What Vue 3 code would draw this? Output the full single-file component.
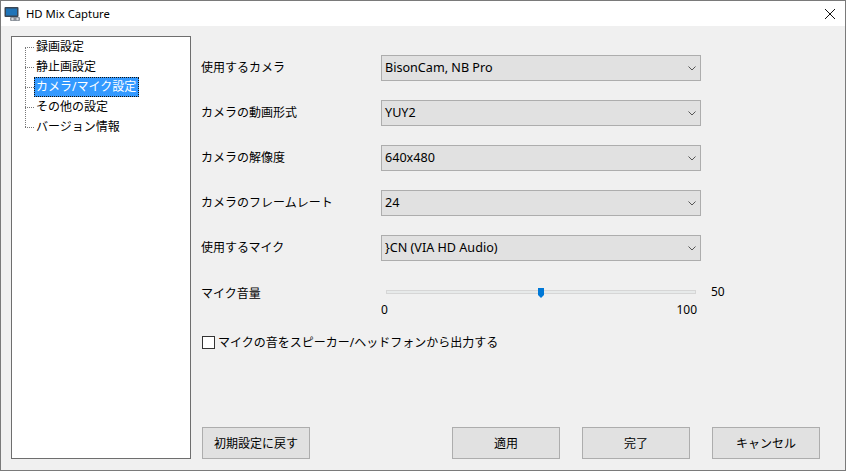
<script setup>
const tree = [
  { label: '録画設定' },
  { label: '静止画設定' },
  { label: 'カメラ/マイク設定', selected: true },
  { label: 'その他の設定' },
  { label: 'バージョン情報' }
]
const rows = [
  { label: '使用するカメラ', value: 'BisonCam, NB Pro' },
  { label: 'カメラの動画形式', value: 'YUY2' },
  { label: 'カメラの解像度', value: '640x480' },
  { label: 'カメラのフレームレート', value: '24' },
  { label: '使用するマイク', value: '}CN (VIA HD Audio)' }
]
</script>

<template>
  <div class="window">
    <header class="titlebar">
      <svg class="appicon" width="17" height="16" viewBox="0 0 17 16">
        <rect x="0.5" y="1" width="14" height="10" rx="1" fill="#3a4654" />
        <rect x="2" y="2.5" width="11" height="7" fill="#1f74b8" />
        <rect x="6" y="11" width="10" height="4" rx="1" fill="#8b929a" />
        <circle cx="8.5" cy="13" r="1.2" fill="#d5d8dc" />
        <circle cx="13.5" cy="13" r="1.2" fill="#d5d8dc" />
      </svg>
      <span class="title">HD Mix Capture</span>
      <svg class="close" width="12" height="12" viewBox="0 0 12 12">
        <path d="M1 1 L11 11 M11 1 L1 11" stroke="#111" stroke-width="1" fill="none" />
      </svg>
    </header>

    <div class="content">
      <nav class="tree">
        <div class="guide"></div>
        <div v-for="item in tree" :key="item.label" class="node">
          <span class="dash"></span>
          <span class="node-label" :class="{ selected: item.selected }">{{ item.label }}</span>
        </div>
      </nav>

      <main class="panel">
        <div class="form">
          <div v-for="row in rows" :key="row.label" class="row">
            <span class="label">{{ row.label }}</span>
            <div class="combo">
              <span class="combo-text">{{ row.value }}</span>
              <svg width="8" height="5" viewBox="0 0 8 5">
                <path d="M0.5 0.5 L4 4 L7.5 0.5" stroke="#555" stroke-width="1" fill="none" />
              </svg>
            </div>
          </div>

          <div class="volume">
            <span class="label">マイク音量</span>
            <div class="slider">
              <div class="track"><span class="thumb"></span></div>
              <div class="ticks"><span>0</span><span>100</span></div>
            </div>
            <span class="value">50</span>
          </div>

          <label class="check">
            <span class="box"></span>
            <span>マイクの音をスピーカー/ヘッドフォンから出力する</span>
          </label>
        </div>

        <footer class="buttons">
          <button class="btn">初期設定に戻す</button>
          <div class="right">
            <button class="btn">適用</button>
            <button class="btn">完了</button>
            <button class="btn">キャンセル</button>
          </div>
        </footer>
      </main>
    </div>
  </div>
</template>

<style>
html, body { margin: 0; background: #f0f0f0; overflow: hidden; }
</style>

<style scoped>
.window {
  box-sizing: border-box;
  width: 846px;
  height: 471px;
  border: 1px solid #7a7a7a;
  background: #f0f0f0;
  display: flex;
  flex-direction: column;
  font-family: "Noto Sans", "Noto Sans CJK JP", sans-serif;
  font-size: 12px;
  color: #000;
}
.titlebar {
  height: 25px;
  flex: none;
  background: #fff;
  display: flex;
  align-items: center;
  padding-left: 3px;
  padding-right: 9px;
}
.appicon { margin-right: 5px; }
.title { flex: 1; font-size: 11.3px; }
.content {
  flex: 1;
  display: flex;
  padding: 10px 0 11px 10px;
  min-height: 0;
}
.tree {
  position: relative;
  box-sizing: border-box;
  width: 180px;
  background: #fff;
  border: 1px solid #6e6e6e;
  flex: none;
}
.guide {
  position: absolute;
  left: 13px;
  top: 10px;
  height: 80px;
  border-left: 1px dotted #777;
}
.node {
  height: 20px;
  display: flex;
  align-items: center;
  padding-left: 13px;
  box-sizing: border-box;
}
.dash {
  width: 9px;
  border-top: 1px dotted #777;
}
.node-label {
  padding: 0 1px;
  line-height: 18px;
  height: 18px;
  border: 1px solid transparent;
  white-space: nowrap;
}
.selected {
  background: #3399ff;
  color: #fff;
  border: 1px dotted #1a1208;
  padding-right: 2px;
}
.panel {
  flex: 1;
  display: flex;
  flex-direction: column;
  justify-content: space-between;
  padding-left: 11px;
  padding-right: 25px;
  min-width: 0;
}
.form {
  padding-top: 19px;
  display: flex;
  flex-direction: column;
}
.row {
  display: grid;
  grid-template-columns: 179px 320px;
  align-items: center;
  height: 26px;
  margin-bottom: 19px;
}
.label { white-space: nowrap; margin-left: -1px; }
.row .label { margin-top: -3px; }
.combo {
  box-sizing: border-box;
  height: 26px;
  background: #e1e1e1;
  border: 1px solid #adadad;
  display: flex;
  align-items: center;
  justify-content: space-between;
  padding: 0 4px 0 3px;
  font-size: 12.6px;
}
.combo-text { margin-top: -2px; }
.volume {
  display: grid;
  grid-template-columns: 179px 320px auto;
  align-items: start;
  height: 42px;
}
.volume .label { margin-top: 4px; }
.slider { padding: 0 5px 0 0; }
.track {
  position: relative;
  box-sizing: border-box;
  height: 4px;
  margin: 10px 0 0 5px;
  background: #e7eaea;
  border: 1px solid #d6d6d6;
}
.thumb {
  position: absolute;
  left: 151px;
  top: -3px;
  width: 6px;
  height: 10px;
  background: #0078d7;
  clip-path: polygon(0 0, 100% 0, 100% 70%, 50% 100%, 0 70%);
}
.ticks {
  display: flex;
  justify-content: space-between;
  margin-top: 8px;
  margin-right: -1px;
  line-height: 16px;
}
.value { margin-left: 10px; margin-top: 3px; }
.check {
  display: flex;
  align-items: center;
  gap: 3px;
  margin-top: 11px;
  white-space: nowrap;
}
.box {
  box-sizing: border-box;
  width: 13px;
  height: 13px;
  background: #fff;
  border: 1px solid #333;
}
.buttons {
  display: flex;
  justify-content: space-between;
}
.right { display: flex; gap: 22px; }
.btn {
  box-sizing: border-box;
  width: 108px;
  height: 32px;
  background: #e1e1e1;
  border: 1px solid #adadad;
  font: inherit;
  color: #000;
  padding: 0;
}
</style>
